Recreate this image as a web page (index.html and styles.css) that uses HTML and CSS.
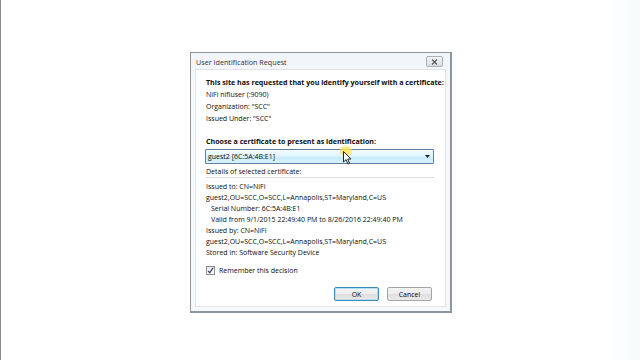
FILE: index.html
```html
<!DOCTYPE html>
<html>
<head>
<meta charset="utf-8">
<link rel="stylesheet" href="styles.css">
</head>
<body>
<div class="screen">
  <div class="dialog">
    <div class="titlebar">
      <span class="title">User Identification Request</span>
      <span class="close"><svg width="7" height="6" viewBox="0 0 7 6"><path d="M1 0.5 L6 5.5 M6 0.5 L1 5.5" stroke="#555" stroke-width="1.1" fill="none"/></svg></span>
    </div>
    <div class="content">
      <p class="bold">This site has requested that you identify yourself with a certificate:</p>
      <p class="line">NiFi nifiuser (:9090)</p>
      <p class="line">Organization: "SCC"</p>
      <p class="line">Issued Under: "SCC"</p>
      <p class="bold choose">Choose a certificate to present as identification:</p>
      <div class="select">
        <span>guest2 [6C:5A:4B:E1]</span>
        <svg class="arrow" width="5" height="3" viewBox="0 0 5 3"><path d="M0 0 H5 L2.5 3 Z" fill="#222"/></svg>
      </div>
      <p class="line details-label">Details of selected certificate:</p>
      <div class="details">
        <p>Issued to: CN=NiFi</p>
        <p>guest2,OU=SCC,O=SCC,L=Annapolis,ST=Maryland,C=US</p>
        <p class="indent">Serial Number: 6C:5A:4B:E1</p>
        <p class="indent">Valid from 9/1/2015 22:49:40 PM to 8/26/2016 22:49:40 PM</p>
        <p>Issued by: CN=NiFi</p>
        <p>guest2,OU=SCC,O=SCC,L=Annapolis,ST=Maryland,C=US</p>
        <p>Stored in: Software Security Device</p>
      </div>
      <label class="remember">
        <span class="check"><svg width="7" height="7" viewBox="0 0 7 7"><path d="M1 3.8 L2.8 5.8 L6 0.8" stroke="#2a3f6e" stroke-width="1.2" fill="none"/></svg></span>
        <span>Remember this decision</span>
      </label>
      <div class="buttons">
        <span class="btn ok">OK</span>
        <span class="btn">Cancel</span>
      </div>
    </div>
    <div class="cursor">
      <span class="glow"></span>
      <svg class="pointer" width="9" height="14" viewBox="0 0 9 14"><path d="M0.5 0.5 V11 L3 8.6 L5 13 L6.6 12.3 L4.7 8 H8 Z" fill="#fff" stroke="#111" stroke-width="0.9"/></svg>
    </div>
  </div>
</div>
</body>
</html>
```

FILE: styles.css
```css
* { box-sizing: border-box; }
html, body { margin: 0; padding: 0; }
body {
  width: 640px; height: 360px; overflow: hidden;
  background: #ffffff;
  font-family: "Open Sans", "Noto Sans", sans-serif;
  color: #0d0d0d;
}
.screen {
  width: 640px; height: 360px;
  border-left: 1px solid #8c8c8c;
  background: linear-gradient(90deg, #fff 0, #fff 600px, #f7fbfd 640px);
  padding: 52px 0 0 189px;
}
.dialog {
  position: relative;
  width: 262px; height: 261px;
  border: 1px solid #8e959c;
  border-right-width: 2px;
  border-bottom-width: 2px;
  background: linear-gradient(#f0f5fa, #f6f8fa 30px);
  padding: 0 4px 4px 4px;
  display: flex; flex-direction: column;
}
.titlebar {
  height: 16px;
  display: flex; align-items: center; justify-content: space-between;
  padding: 1px 2px 0 1px;
}
.title { font-size: 7.2px; color: #333; }
.close {
  width: 17px; height: 11px;
  border: 1px solid #a9b0b7; border-radius: 2px;
  background: linear-gradient(#f4f4f4, #dcdfe2);
  display: flex; align-items: center; justify-content: center;
  margin-right: 1px;
}
.content {
  flex: 1;
  background: #fff;
  border: 1px solid #dfe4e8;
  padding: 5px 10px 0 10px;
  font-size: 7px;
  display: flex; flex-direction: column;
}
p { margin: 0; white-space: nowrap; }
.bold { font-weight: 700; font-size: 7.1px; height: 14px; line-height: 14px; }
.line { height: 12px; line-height: 12px; }
.choose { margin-top: 11px; height: 11px; line-height: 11px; }
.select {
  height: 15px;
  margin: 2px 1px 0 -1px;
  border: 1px solid #5f7f9c;
  border-radius: 1px;
  background: linear-gradient(#f3fbfe 0%, #e2f6fd 45%, #c6ecfb 55%, #d7f3fd 100%);
  display: flex; align-items: center; justify-content: space-between;
  padding: 0 3px 0 2px;
}
.select span { font-size: 7px; }
.details-label { margin-top: 2px; height: 11px; line-height: 11px; }
.details {
  border-top: 1px solid #dcdcdc;
  margin-right: 1px;
  padding-top: 3px;
}
.details p { height: 11px; line-height: 11px; }
.details .indent { padding-left: 5px; }
.remember {
  margin-top: 7px;
  display: flex; align-items: center; gap: 4px;
  height: 11px;
}
.check {
  width: 9px; height: 9px;
  border: 1px solid #8f8f8f;
  background: linear-gradient(#e9e9e9, #fbfbfb);
  display: flex; align-items: center; justify-content: center;
}
.buttons {
  margin-top: 11px;
  display: flex; justify-content: flex-end; gap: 8px;
  margin-right: 3px;
}
.btn {
  width: 45px; height: 14px;
  border: 1px solid #a5a5a5;
  border-radius: 2px;
  background: linear-gradient(#f4f4f4 0%, #ececec 50%, #dedede 51%, #e9e9e9 100%);
  font-size: 7px;
  display: flex; align-items: center; justify-content: center;
}
.btn.ok { border-color: #3f8bb8; box-shadow: inset 0 0 0 1px #b4dff3; }
.cursor {
  position: absolute;
  left: 152px; top: 98px;
  width: 20px; height: 20px;
}
.glow {
  position: absolute; left: -4px; top: -6px;
  width: 14px; height: 12px; border-radius: 50%;
  background: radial-gradient(#ffe15a 0%, rgba(255,225,90,0.7) 50%, rgba(255,225,90,0) 75%);
}
.pointer { position: absolute; left: 0; top: 0; }
```
